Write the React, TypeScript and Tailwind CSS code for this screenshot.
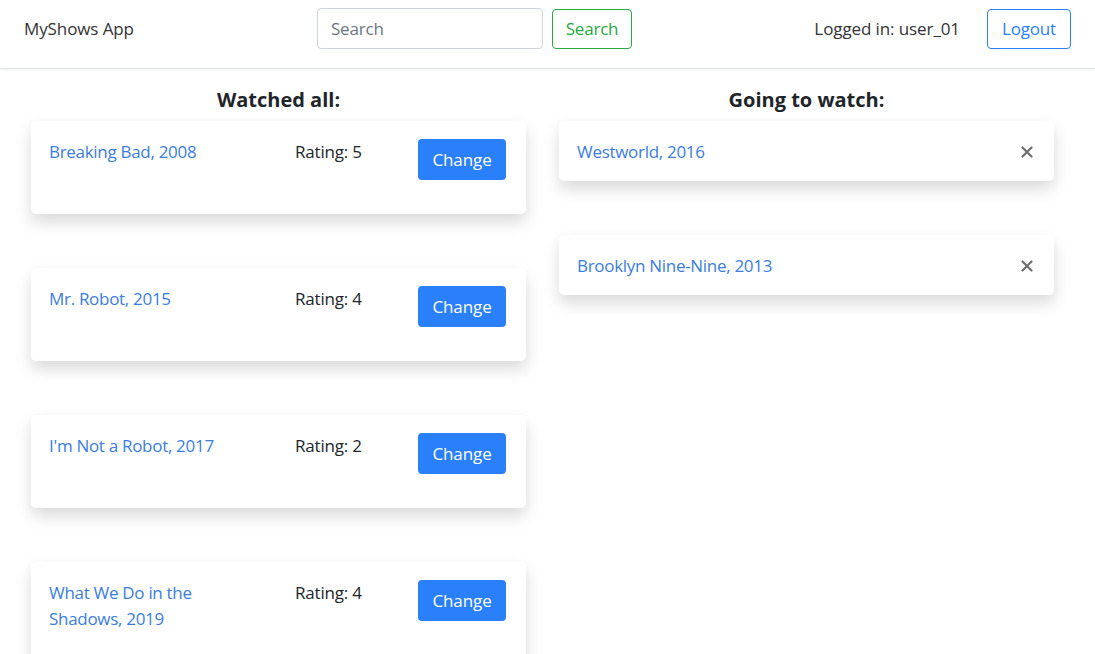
import React from "react";

type Watched = { title: string; rating: number };

const watched: Watched[] = [
  { title: "Breaking Bad, 2008", rating: 5 },
  { title: "Mr. Robot, 2015", rating: 4 },
  { title: "I'm Not a Robot, 2017", rating: 2 },
  { title: "What We Do in the Shadows, 2019", rating: 4 },
];

const planned = ["Westworld, 2016", "Brooklyn Nine-Nine, 2013"];

function CloseIcon() {
  return (
    <svg width="12" height="12" viewBox="0 0 12 12" className="text-[#6e6e6e]">
      <path d="M1.5 1.5 L10.5 10.5 M10.5 1.5 L1.5 10.5" stroke="currentColor" strokeWidth="2.2" strokeLinecap="round" />
    </svg>
  );
}

export default function App() {
  return (
    <div className="min-h-screen bg-white text-[#212529] font-['Open_Sans',sans-serif] text-[17px]">
      {/* Navbar */}
      <nav className="flex items-center pt-2 pb-[19px] px-6 border-b border-[#dee2e6] shadow-[0_1px_3px_rgba(0,0,0,0.06)]">
        <div className="w-[293px] text-[17px] text-[#333] tracking-[-0.1px]">MyShows App</div>
        <div className="flex items-center gap-[9px]">
          <input
            type="text"
            placeholder="Search"
            className="w-[226px] h-[41px] px-[13px] rounded-[4px] border border-[#ced4da] text-[17px] tracking-[-0.2px] placeholder:text-[#6c757d] outline-none"
          />
          <button className="w-[80px] h-[40px] rounded-[4px] border border-[#28a745] text-[#28a745] text-[17px] tracking-[-0.2px]">
            Search
          </button>
        </div>
        <div className="flex-1" />
        <span className="text-[#333] mr-[27px] tracking-[-0.1px]">Logged in: user_01</span>
        <button className="w-[84px] h-[40px] rounded-[4px] border border-[#2a7ffa] text-[#2a7ffa] tracking-[-0.2px]">
          Logout
        </button>
      </nav>

      {/* Lists */}
      <div className="flex gap-[33px] pl-[31px] pt-[18px]">
        <div className="w-[495px] flex flex-col">
          <h5 className="text-center font-bold text-[20px] leading-[24px] mt-[1px] mb-[9px]">Watched all:</h5>
          <div className="flex flex-col gap-[54px]">
            {watched.map((show) => (
              <div
                key={show.title}
                className="bg-white rounded-[5px] shadow-[0_8px_16px_rgba(0,0,0,0.15)] pl-[18px] pr-5 pt-[18px] pb-[34px] flex items-start"
              >
                <a className="w-[190px] text-[#3b7ddd] leading-[26px] tracking-[-0.3px]">{show.title}</a>
                <div className="w-[56px]" />
                <span className="flex-1 leading-[26px] tracking-[-0.2px]">Rating: {show.rating}</span>
                <button className="w-[88px] h-[41px] rounded-[4px] bg-[#2a7ffa] text-white text-[17px] tracking-[-0.1px]">Change</button>
              </div>
            ))}
          </div>
        </div>

        <div className="w-[495px] flex flex-col">
          <h5 className="text-center font-bold text-[20px] leading-[24px] mt-[1px] mb-[9px]">Going to watch:</h5>
          <div className="flex flex-col gap-[54px]">
            {planned.map((t) => (
              <div
                key={t}
                className="h-[60px] bg-white rounded-[5px] shadow-[0_8px_16px_rgba(0,0,0,0.15)] pl-[18px] pr-[21px] pt-[2px] flex items-center justify-between"
              >
                <a className="text-[#3b7ddd] leading-[26px] tracking-[-0.3px]">{t}</a>
                <CloseIcon />
              </div>
            ))}
          </div>
        </div>
      </div>
    </div>
  );
}
